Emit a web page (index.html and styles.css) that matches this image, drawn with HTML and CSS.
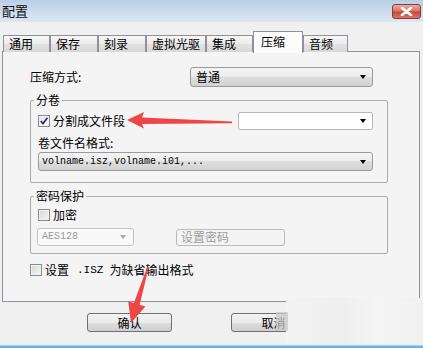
FILE: index.html
```html
<!DOCTYPE html>
<html lang="zh-CN">
<head>
<meta charset="utf-8">
<title>配置</title>
<link rel="stylesheet" href="styles.css">
</head>
<body>
<div class="window">
  <div class="titlebar">
    <span class="title">配置</span>
    <span class="close"><svg width="13" height="9" viewBox="0 0 13 9"><path d="M2 1 L11 8 M11 1 L2 8" stroke="#fff" stroke-width="2.6" stroke-linecap="round"/><path d="M2 1 L11 8 M11 1 L2 8" stroke="#fff" stroke-width="1.6" stroke-linecap="round"/></svg></span>
  </div>
  <div class="tabs">
    <div class="tab">通用</div>
    <div class="tab">保存</div>
    <div class="tab">刻录</div>
    <div class="tab">虚拟光驱</div>
    <div class="tab">集成</div>
    <div class="tab active">压缩</div>
    <div class="tab">音频</div>
  </div>
  <div class="panel">
    <div class="method">
      <span class="label">压缩方式:</span>
      <div class="combo method-combo"><span>普通</span><i class="caret"></i></div>
    </div>
    <fieldset class="group vol">
      <legend>分卷</legend>
      <div class="split">
        <label class="check split-check"><span class="box checked"><svg width="10" height="10" viewBox="0 0 10 10"><path d="M1.8 5 L4 7.6 L8.4 1.8" fill="none" stroke="#1d2f83" stroke-width="1.7"/></svg></span>分割成文件段</label>
        <div class="combo white split-combo"><i class="caret"></i></div>
      </div>
      <div class="caption">卷文件名格式:</div>
      <div class="combo wide mono"><span>volname.isz,volname.i01,...</span><i class="caret"></i></div>
    </fieldset>
    <fieldset class="group pwd">
      <legend>密码保护</legend>
      <label class="check pwd-check"><span class="box"></span>加密</label>
      <div class="pw">
        <div class="combo disabled mono"><span>AES128</span><i class="caret"></i></div>
        <button class="btn disabled" type="button">设置密码</button>
      </div>
    </fieldset>
    <label class="check isz"><span class="box"></span>设置<span class="ascii">.ISZ</span>为缺省输出格式</label>
  </div>
  <div class="buttons">
    <button class="btn" type="button">确认</button>
    <button class="btn" type="button">取消</button>
  </div>
  <div class="taskbar"></div>
  <div class="blur blur-main"></div>
  <div class="blur blur-dark"></div>
  <svg class="arrows" width="423" height="348" viewBox="0 0 423 348">
    <polygon points="127,120 144,112 142,117.6 232,121.6 232,123.2 142,124 144,128.5" fill="#ee4646"/>
    <polygon points="131,323 128.2,301.3 133.9,303 147.3,266.8 148.7,267.2 139.7,304.8 145.4,306.5" fill="#ee4646"/>
  </svg>
</div>
</body>
</html>
```

FILE: styles.css
```css
html, body {
  margin: 0;
  padding: 0;
}
body {
  width: 423px;
  height: 348px;
  overflow: hidden;
}
.window {
  width: 423px;
  height: 348px;
  position: relative;
  overflow: hidden;
  background: #f0f0f0;
  font: 12px/14px "Noto Sans CJK SC", "Liberation Sans", sans-serif;
  color: #000;
}
.titlebar {
  height: 22px;
  box-sizing: border-box;
  display: flex;
  align-items: center;
  justify-content: space-between;
  padding: 0 2px 0 2px;
  background: linear-gradient(#b9cfe7, #cfdded 55%, #dde7f2);
}
.title {
  font-size: 13px;
  color: #111;
}
.close {
  width: 29px;
  height: 15px;
  box-sizing: border-box;
  border: 1px solid #8a3a2e;
  border-radius: 3px;
  background: linear-gradient(#e9ada2, #d97463 45%, #c7483a 55%, #d77a66);
  display: flex;
  align-items: center;
  justify-content: center;
}
.tabs {
  display: grid;
  grid-template-columns: 47px 48px 48px 60px 47px 50px 45px;
  align-items: end;
  height: 20px;
  margin: 9px 0 0 3px;
  position: relative;
  z-index: 1;
}
.tab {
  height: 17px;
  box-sizing: border-box;
  border: 1px solid #8e9199;
  border-bottom: none;
  padding-left: 5px;
  line-height: 16px;
  font-size: 12px;
  background: linear-gradient(#f6f6f6, #ececec 50%, #e2e2e2 50%, #d8d8d8);
}
.tab.active {
  height: 22px;
  margin-bottom: -1px;
  padding-left: 7px;
  padding-top: 1px;
  line-height: 18px;
  background: #fcfcfc;
}
.panel {
  margin: 0 3px 0 2px;
  height: 251px;
  box-sizing: border-box;
  border: 1px solid #8e9199;
  background: #f4f4f4;
  padding: 15px 0 0 27px;
}
.method {
  display: flex;
  align-items: center;
  height: 20px;
}
.method .label {
  width: 160px;
}
.combo {
  box-sizing: border-box;
  border: 1px solid #9a9a9a;
  border-radius: 3px;
  background: linear-gradient(#f4f4f4, #ececec 50%, #dedede 50%, #d2d2d2);
  display: flex;
  align-items: center;
  padding-left: 5px;
  position: relative;
}
.method-combo {
  width: 183px;
  height: 20px;
}
.caret {
  position: absolute;
  right: 6px;
  top: 50%;
  margin-top: -2px;
  width: 0;
  height: 0;
  border-top: 4px solid #000;
  border-left: 3.5px solid transparent;
  border-right: 3.5px solid transparent;
}
.group {
  margin: 6px 0 0 0;
  width: 358px;
  min-width: 0;
  box-sizing: border-box;
  border: 1px solid #acacac;
  border-radius: 2px;
  padding: 0 0 11px 0;
}
.group legend {
  margin-left: 3px;
  padding: 0 2px;
  line-height: 14px;
}
.pwd {
  padding-bottom: 7px;
}
.check {
  display: flex;
  align-items: center;
  height: 14px;
}
.box {
  width: 12px;
  height: 12px;
  box-sizing: border-box;
  border: 1px solid #8c8c8c;
  background: linear-gradient(135deg, #d6d6d6, #f7f7f7);
  box-shadow: inset 0 0 0 1px #f2f2f2;
  margin-right: 3px;
  display: inline-flex;
  align-items: center;
  justify-content: center;
  flex: none;
}
.box.checked {
  background: linear-gradient(135deg, #e4e4e4, #ffffff);
}
.ascii {
  font-family: "Liberation Mono", monospace;
  font-size: 11px;
  margin: 0 6px 0 8px;
}
.split {
  display: flex;
  align-items: center;
  height: 18px;
  margin: 5px 0 0 7px;
}
.split-check {
  width: 200px;
}
.white {
  background: #fff;
  border-color: #b5b7bd;
  border-radius: 2px;
}
.split-combo {
  width: 135px;
  height: 18px;
}
.caption {
  margin: 6px 0 0 7px;
  line-height: 14px;
}
.mono {
  font-family: "Liberation Mono", monospace;
  font-size: 10px;
}
.wide {
  margin: 2px 0 0 7px;
  width: 335px;
  height: 19px;
  padding-left: 3px;
}
.pwd-check {
  margin: 5px 0 0 7px;
}
.pw {
  display: flex;
  align-items: center;
  height: 18px;
  margin: 6px 0 0 6px;
}
.combo.disabled {
  width: 97px;
  height: 18px;
  background: #f9f9f9;
  border-color: #c3c3c3;
  color: #9a9a9a;
  padding-left: 4px;
}
.combo.disabled .caret {
  border-top-color: #a8a8a8;
  right: 7px;
}
.btn {
  box-sizing: border-box;
  width: 85px;
  height: 19px;
  padding: 0;
  border: 1px solid #707070;
  border-radius: 3px;
  background: linear-gradient(#f3f3f3, #ebebeb 50%, #dddddd 50%, #cfcfcf);
  font: 12px/14px "Noto Sans CJK SC", "Liberation Sans", sans-serif;
  color: #000;
}
.btn.disabled {
  width: 109px;
  height: 17px;
  margin-left: 42px;
  background: #f4f4f4;
  border-color: #b9bcbf;
  color: #9c9c9c;
  text-align: left;
  padding-left: 4px;
}
.isz {
  margin-top: 9px;
}
.buttons {
  display: flex;
  gap: 59px;
  padding-left: 87px;
  margin-top: 11px;
}
.taskbar {
  margin-top: 13px;
  height: 3px;
  background: linear-gradient(#a6dcf0, #4aa3cc);
}
.blur {
  position: absolute;
}
.blur-main {
  left: 286px;
  top: 298px;
  width: 134px;
  height: 46px;
  background: linear-gradient(90deg, #f3f3f3, #eeeeee 40%, #f5f5f5 70%, #f0f0f0);
}
.blur-dark {
  left: 276px;
  top: 312px;
  width: 12px;
  height: 19px;
  background: rgba(200, 200, 200, 0.75);
}
.arrows {
  position: absolute;
  left: 0;
  top: 0;
  pointer-events: none;
}
```
